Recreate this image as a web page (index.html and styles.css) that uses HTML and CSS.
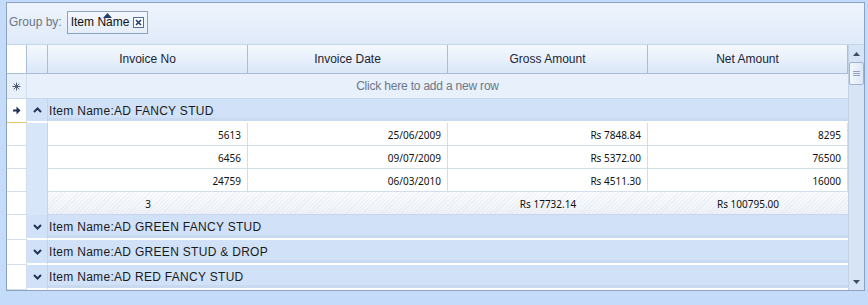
FILE: index.html
```html
<!DOCTYPE html>
<html lang="en">
<head>
    <meta charset="UTF-8">
    <title>Invoices grouped by item</title>
    <link rel="stylesheet" href="styles.css">
</head>
<body>
    <div class="grid-frame">
        <div class="group-panel">
            <span class="group-label">Group by:</span>
            <div class="group-chip">
                <svg class="sort-mark" width="9" height="5" viewBox="0 0 9 5"><path d="M0 5 L4.5 0 L9 5 Z" fill="#1f3f73"/></svg>
                <span>Item Name</span>
                <span class="chip-close">
                    <svg width="7" height="7" viewBox="0 0 7 7"><path d="M1 1 L6 6 M6 1 L1 6" stroke="#1f3f73" stroke-width="1.6"/></svg>
                </span>
            </div>
        </div>

        <div class="grid-body">
            <div class="grid-rows">
                <div class="row header-row">
                    <div class="cell ind"></div>
                    <div class="cell exp"></div>
                    <div class="cell">Invoice No</div>
                    <div class="cell">Invoice Date</div>
                    <div class="cell">Gross Amount</div>
                    <div class="cell">Net Amount</div>
                </div>

                <div class="row new-row">
                    <div class="cell ind">
                        <svg width="9" height="9" viewBox="0 0 9 9"><path d="M4.5 0.5 V8.5 M0.5 4.5 H8.5 M1.7 1.7 L7.3 7.3 M7.3 1.7 L1.7 7.3" stroke="#4b5d78" stroke-width="1"/></svg>
                    </div>
                    <div class="new-text">Click here to add a new row</div>
                </div>

                <div class="row group-row">
                    <div class="cell ind current">
                        <svg width="8" height="9" viewBox="0 0 8 9"><path d="M0 3.5 H3.5 V0.5 L7.5 4.5 L3.5 8.5 V5.5 H0 Z" fill="#1f3358"/></svg>
                    </div>
                    <div class="cell exp">
                        <svg width="9" height="6" viewBox="0 0 9 6"><path d="M1 5 L4.5 1.5 L8 5" fill="none" stroke="#1f3358" stroke-width="2"/></svg>
                    </div>
                    <div class="group-text">Item Name:AD FANCY STUD</div>
                </div>

                <div class="row data-row">
                    <div class="cell ind"></div>
                    <div class="cell exp"></div>
                    <div class="cell num">5613</div>
                    <div class="cell num">25/06/2009</div>
                    <div class="cell num">Rs 7848.84</div>
                    <div class="cell num">8295</div>
                </div>
                <div class="row data-row">
                    <div class="cell ind"></div>
                    <div class="cell exp"></div>
                    <div class="cell num">6456</div>
                    <div class="cell num">09/07/2009</div>
                    <div class="cell num">Rs 5372.00</div>
                    <div class="cell num">76500</div>
                </div>
                <div class="row data-row">
                    <div class="cell ind"></div>
                    <div class="cell exp"></div>
                    <div class="cell num">24759</div>
                    <div class="cell num">06/03/2010</div>
                    <div class="cell num">Rs 4511.30</div>
                    <div class="cell num">16000</div>
                </div>

                <div class="row summary-row">
                    <div class="cell ind"></div>
                    <div class="cell exp"></div>
                    <div class="cell sum">3</div>
                    <div class="cell sum"></div>
                    <div class="cell sum">Rs 17732.14</div>
                    <div class="cell sum">Rs 100795.00</div>
                </div>

                <div class="row group-row collapsed">
                    <div class="cell ind"></div>
                    <div class="cell exp">
                        <svg width="9" height="6" viewBox="0 0 9 6"><path d="M1 1 L4.5 4.5 L8 1" fill="none" stroke="#1f3358" stroke-width="2"/></svg>
                    </div>
                    <div class="group-text">Item Name:AD GREEN FANCY STUD</div>
                </div>
                <div class="row group-row collapsed">
                    <div class="cell ind"></div>
                    <div class="cell exp">
                        <svg width="9" height="6" viewBox="0 0 9 6"><path d="M1 1 L4.5 4.5 L8 1" fill="none" stroke="#1f3358" stroke-width="2"/></svg>
                    </div>
                    <div class="group-text">Item Name:AD GREEN STUD &amp; DROP</div>
                </div>
                <div class="row group-row collapsed">
                    <div class="cell ind"></div>
                    <div class="cell exp">
                        <svg width="9" height="6" viewBox="0 0 9 6"><path d="M1 1 L4.5 4.5 L8 1" fill="none" stroke="#1f3358" stroke-width="2"/></svg>
                    </div>
                    <div class="group-text">Item Name:AD RED FANCY STUD</div>
                </div>
            </div>

            <div class="scrollbar">
                <div class="scroll-btn">
                    <svg width="7" height="4" viewBox="0 0 7 4"><path d="M0 4 L3.5 0 L7 4 Z" fill="#3c4d66"/></svg>
                </div>
                <div class="scroll-thumb">
                    <svg width="7" height="5" viewBox="0 0 7 5"><path d="M0 0.5 H7 M0 2.5 H7 M0 4.5 H7" stroke="#8ea3bf" stroke-width="1"/></svg>
                </div>
                <div class="scroll-track"></div>
                <div class="scroll-btn">
                    <svg width="7" height="4" viewBox="0 0 7 4"><path d="M0 0 L3.5 4 L7 0 Z" fill="#3c4d66"/></svg>
                </div>
            </div>
        </div>
    </div>
</body>
</html>
```

FILE: styles.css
```css
:root {
    --page-bg: #c4dbf9;
    --frame-border: #8ca2c0;
    --line-color: #d3deec;
    --header-line: #a9bdd7;
    --group-bg: #d1e2f8;
    --indent-bg: #d7e6f9;
    --text-color: #1a1a1a;
}

* {
    margin: 0;
    padding: 0;
    box-sizing: border-box;
}

body {
    background-color: var(--page-bg);
    font-family: "Liberation Sans", Arial, sans-serif;
    font-size: 12px;
    color: var(--text-color);
    padding: 2px 3px 0 6px;
}

.grid-frame {
    width: 859px;
    border: 1px solid var(--frame-border);
    background: #ffffff;
}

/* Group by panel */
.group-panel {
    height: 42px;
    display: flex;
    align-items: center;
    gap: 5px;
    padding-left: 2px;
    padding-bottom: 3px;
    background: linear-gradient(to bottom, #eef4fc, #dfeaf9);
    border-bottom: 1px solid #c5d5ea;
}

.group-label {
    color: #6b7686;
}

.group-chip {
    position: relative;
    display: flex;
    align-items: center;
    gap: 4px;
    height: 23px;
    padding: 0 3px 0 3px;
    border: 1px solid #8ca2c0;
    background: linear-gradient(to bottom, #f4f8fd, #e4edf9);
    color: #111;
}

.sort-mark {
    position: absolute;
    left: 35px;
    top: 1px;
}

.chip-close {
    width: 11px;
    height: 11px;
    display: flex;
    align-items: center;
    justify-content: center;
    border: 1px solid #4e6f9f;
    background: #ffffff;
}

/* Grid area */
.grid-body {
    display: flex;
}

.grid-rows {
    width: 841px;
}

.row {
    display: grid;
    grid-template-columns: 20px 21px repeat(4, 200px);
}

.cell {
    display: flex;
    align-items: center;
    justify-content: center;
    border-right: 1px solid var(--line-color);
    border-bottom: 1px solid var(--line-color);
    white-space: nowrap;
}

.header-row {
    height: 29px;
}

.header-row .cell {
    background: linear-gradient(to bottom, #f5f9fe, #dae7f8);
    border-right: 1px solid var(--header-line);
    border-bottom: 1px solid var(--header-line);
    color: #1b2433;
}

.new-row {
    height: 25px;
    background: #e8f0fb;
}

.new-row .cell.ind {
    background: #e8f0fb;
    border-bottom: 1px solid #c8d7ea;
}

.new-text {
    grid-column: 2 / 7;
    display: flex;
    align-items: center;
    justify-content: center;
    padding-right: 20px;
    color: #6d7787;
    border-bottom: 1px solid #c8d7ea;
    letter-spacing: -0.2px;
}

.group-row {
    height: 24px;
    background: var(--group-bg);
}

.group-row.collapsed {
    height: 25px;
}

.group-row .cell.ind {
    background: #ffffff;
    border-bottom: 1px solid var(--line-color);
}

.group-row .cell.ind.current {
    border-bottom: 1px solid #e9c46a;
}

.group-row .cell.exp {
    border-right: 1px solid #c3d4ea;
    border-bottom: 2px solid #ffffff;
}

.group-text {
    grid-column: 3 / 7;
    display: flex;
    align-items: center;
    padding-left: 1px;
    padding-top: 1px;
    letter-spacing: 0.3px;
    border-bottom: 2px solid #ffffff;
    box-shadow: inset 0 -3px 0 #c9daf0;
}

.data-row,
.summary-row {
    height: 23px;
}

.cell.ind {
    background: #ffffff;
}

.data-row .cell.exp,
.summary-row .cell.exp {
    background: var(--indent-bg);
    border-bottom-color: var(--indent-bg);
    border-right: 1px solid #c3d4ea;
}

.cell.num,
.cell.sum {
    font-family: "Noto Sans", "DejaVu Sans", sans-serif;
    font-size: 10px;
    padding-top: 1px;
    color: #111;
}

.cell.num {
    justify-content: flex-end;
    padding-right: 6px;
}

.cell.sum {
    background:
        repeating-linear-gradient(135deg, rgba(205, 214, 228, 0.25) 0 1px, transparent 1px 3px),
        linear-gradient(to bottom, #fbfcfe, #eef2f8);
    border-right: none;
    border-bottom: 1px solid #c8d6e9;
}

/* Scrollbar */
.scrollbar {
    width: 16px;
    display: flex;
    flex-direction: column;
    background: #d6e4f6;
    border-left: 1px solid #c1d2e8;
}

.scroll-btn {
    height: 17px;
    display: flex;
    align-items: center;
    justify-content: center;
}

.scroll-thumb {
    height: 23px;
    display: flex;
    align-items: center;
    justify-content: center;
    border: 1px solid #9fb3cd;
    border-radius: 2px;
    background: linear-gradient(to right, #f3f7fd, #dbe7f7);
}

.scroll-track {
    flex: 1;
}
```
